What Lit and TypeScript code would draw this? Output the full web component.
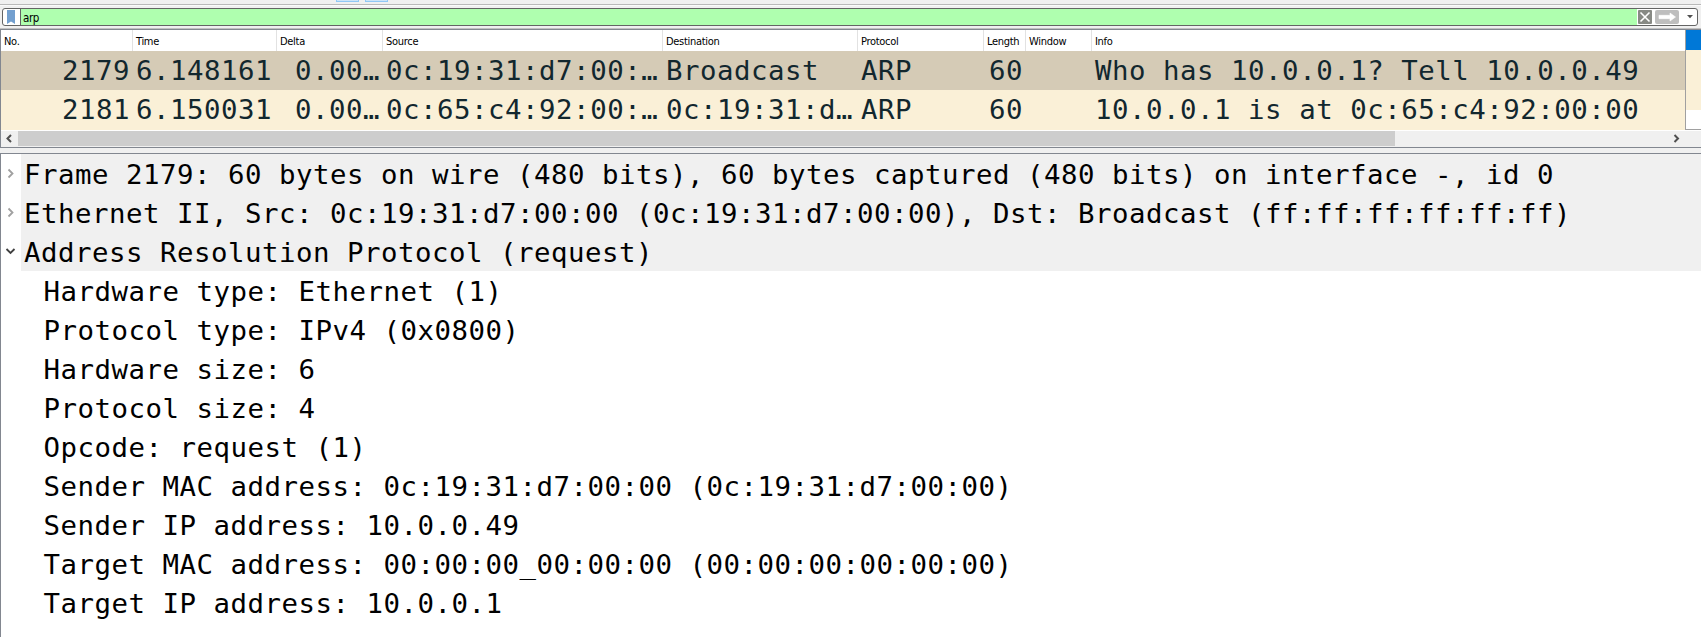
import { LitElement, html, css, svg } from "lit";
import { customElement, property } from "lit/decorators.js";

const COLUMNS = ["No.", "Time", "Delta", "Source", "Destination", "Protocol", "Length", "Window", "Info"];

const PACKETS = [
  { selected: true, cells: ["2179", "6.148161", "0.00…", "0c:19:31:d7:00:…", "Broadcast", "ARP", "60", "", "Who has 10.0.0.1? Tell 10.0.0.49"] },
  { selected: false, cells: ["2181", "6.150031", "0.00…", "0c:65:c4:92:00:…", "0c:19:31:d…", "ARP", "60", "", "10.0.0.1 is at 0c:65:c4:92:00:00"] },
];

const TREE: { text: string; open?: boolean; child?: boolean }[] = [
  { text: "Frame 2179: 60 bytes on wire (480 bits), 60 bytes captured (480 bits) on interface -, id 0" },
  { text: "Ethernet II, Src: 0c:19:31:d7:00:00 (0c:19:31:d7:00:00), Dst: Broadcast (ff:ff:ff:ff:ff:ff)" },
  { text: "Address Resolution Protocol (request)", open: true },
  { text: "Hardware type: Ethernet (1)", child: true },
  { text: "Protocol type: IPv4 (0x0800)", child: true },
  { text: "Hardware size: 6", child: true },
  { text: "Protocol size: 4", child: true },
  { text: "Opcode: request (1)", child: true },
  { text: "Sender MAC address: 0c:19:31:d7:00:00 (0c:19:31:d7:00:00)", child: true },
  { text: "Sender IP address: 10.0.0.49", child: true },
  { text: "Target MAC address: 00:00:00_00:00:00 (00:00:00:00:00:00)", child: true },
  { text: "Target IP address: 10.0.0.1", child: true },
];

@customElement("filter-bar")
export class FilterBar extends LitElement {
  @property() value = "";
  static styles = css`
    :host { display: block; padding: 0 3px 0 2px; }
    .box { display: flex; box-sizing: border-box; height: 18px; border: 1px solid #646464; border-radius: 3px; background: #fff; overflow: hidden; }
    .mark { width: 17px; border-right: 1px solid #646464; }
    .mark svg { display: block; margin-left: 4px; margin-top: 1px; }
    .text { flex: 1; background: #afffaf; padding-left: 2px; font: 11.5px/18px "DejaVu Sans Condensed", "DejaVu Sans", sans-serif; letter-spacing: -0.4px; color: #000; }
    .actions { width: 60px; }
    svg { display: block; }
  `;
  render() {
    return html`<div class="box">
      <div class="mark">
        <svg width="8" height="14" viewBox="0 0 8 14"><path d="M0 0H8V14L4 11.5L0 14Z" fill="#729fcf" /></svg>
      </div>
      <div class="text">${this.value}</div>
      <svg class="actions" width="60" height="16" viewBox="0 0 60 16">
        <rect x="1" y="1" width="14" height="14" rx="1" fill="#888a85" />
        <path d="M3.5 3.5L12.5 12.5M12.5 3.5L3.5 12.5" stroke="#fff" stroke-width="1.6" />
        <rect x="18" y="1" width="24" height="14" rx="2" fill="#bebebe" />
        <path d="M22 6.3H33V4L38.5 8L33 12V9.7H22Z" fill="#fff" stroke="#fff" stroke-width="0.6" stroke-linejoin="round" />
        <path d="M50 6H56L53 9.2Z" fill="#505050" />
      </svg>
    </div>`;
  }
}

@customElement("packet-list")
export class PacketList extends LitElement {
  static styles = css`
    :host { display: block; }
    .frame { box-sizing: border-box; height: 119px; border: solid #828790; border-width: 1px 0 1px 1px; background: #fff; }
    .main { display: flex; height: 101px; }
    .grid { flex: 1; min-width: 0; }
    .row { display: grid; grid-template-columns: 132px 144px 106px 280px 195px 126px 42px 66px 1fr; }
    .head { height: 21px; font: 11px/24px "DejaVu Sans Condensed", "DejaVu Sans", sans-serif; letter-spacing: -0.3px; color: #000; }
    .head .cell { box-sizing: border-box; border-right: 1px solid #e2e2e2; padding-left: 3px; height: 21px; }
    .head .cell:last-child { border-right: 0; }
    .packet { height: 40px; line-height: 40px; background: #faf0d7; color: #12272e; font-family: "DejaVu Sans Mono", monospace; font-size: 27.4px; letter-spacing: 0.52px; white-space: pre; }
    .packet.selected { height: 39px; line-height: 39px; background: #d5cbb6; }
    .packet .cell { padding: 0 3px; overflow: hidden; }
    .packet .num { text-align: right; padding-right: 3px; padding-left: 0; }
    .map { width: 16px; box-sizing: border-box; border-left: 1px solid #a0a0a0; border-bottom: 1px solid #a0a0a0; height: 100px; }
    .now { height: 20px; background: #0078d7; }
    .arp { height: 60px; background: #faf0d7; }
    .scroll { display: flex; height: 15px; background: #f0f0f0; padding-bottom: 1px; }
    .thumb { width: 1377px; height: 15px; background: #cdcdcd; }
    .arrow { width: 17px; height: 15px; }
    .gap { flex: 1; }
    .edge { width: 16px; }
  `;
  render() {
    return html`<div class="frame">
      <div class="main">
        <div class="grid">
          <div class="row head">${COLUMNS.map((c) => html`<div class="cell">${c}</div>`)}</div>
          ${PACKETS.map((p) => html`<div class="row packet ${p.selected ? "selected" : ""}">
            ${p.cells.map((c, i) => html`<div class="cell ${[0, 2, 6].includes(i) ? "num" : ""}">${c}</div>`)}
          </div>`)}
        </div>
        <div class="map"><div class="now"></div><div class="arp"></div></div>
      </div>
      <div class="scroll">
        <svg class="arrow" viewBox="0 0 17 15"><path d="M10 4L6.5 7.5L10 11" fill="none" stroke="#505050" stroke-width="2" /></svg>
        <div class="thumb"></div>
        <div class="gap"></div>
        <svg class="arrow" viewBox="0 0 17 15"><path d="M6.5 4L10 7.5L6.5 11" fill="none" stroke="#505050" stroke-width="2" /></svg>
        <div class="edge"></div>
      </div>
    </div>`;
  }
}

@customElement("packet-details")
export class PacketDetails extends LitElement {
  static styles = css`
    :host { display: block; box-sizing: border-box; border: solid #828790; border-width: 1px 0 0 1px; background: #fff; }
    .item { display: flex; height: 39px; line-height: 41px; font-family: "DejaVu Sans Mono", monospace; font-size: 27.4px; letter-spacing: 0.51px; white-space: pre; color: #000; }
    .twist { width: 20px; height: 39px; flex: none; }
    .label { flex: 1; padding-left: 3px; }
    .top .label { background: #f0f0f0; }
    .child .label { padding-left: 22.5px; }
  `;
  render() {
    return TREE.map((t) => html`<div class="item ${t.child ? "child" : "top"}">
      <svg class="twist" viewBox="0 0 20 39">${t.child ? "" : t.open
        ? svg`<path d="M5.5 17L9.5 21L13.5 17" fill="none" stroke="#404040" stroke-width="1.8" />`
        : svg`<path d="M7.5 15.5L11.5 19.5L7.5 23.5" fill="none" stroke="#a0a0a0" stroke-width="1.8" />`}</svg>
      <div class="label">${t.text}</div>
    </div>`);
  }
}

@customElement("app-root")
export class AppRoot extends LitElement {
  static styles = css`
    :host { display: flex; flex-direction: column; width: 1701px; height: 637px; background: #f0f0f0; overflow: hidden; }
    .tools { display: flex; gap: 6px; height: 4px; padding-left: 336px; border-bottom: 1px solid #b9b9b9; }
    .button { box-sizing: border-box; width: 23px; height: 2px; background: #cce4f7; border: solid #90c8f6; border-width: 0 1px 1px; }
    .band { box-sizing: border-box; height: 24px; padding-top: 2px; background: #f0f0f0; border-top: 1px solid #fafafa; border-bottom: 1px solid #c0c0c0; }
    packet-details { margin-top: 5px; flex: 1; }
  `;
  render() {
    return html`
      <div class="tools"><div class="button"></div><div class="button"></div></div>
      <div class="band"><filter-bar value="arp"></filter-bar></div>
      <packet-list></packet-list>
      <packet-details></packet-details>
    `;
  }
}
